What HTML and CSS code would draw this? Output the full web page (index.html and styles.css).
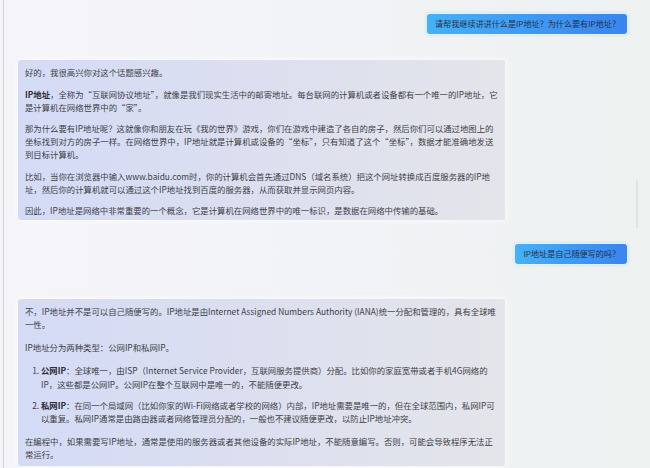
FILE: index.html
```html
<!DOCTYPE html>
<html lang="zh-CN">
<head>
<meta charset="utf-8">
<title>Chat</title>
<link rel="stylesheet" href="styles.css">
</head>
<body>
<div class="page">
  <div class="chat">
    <div class="row user">
      <div class="bubble">请帮我继续讲讲什么是IP地址？为什么要有IP地址？</div>
    </div>
    <div class="row bot">
      <div class="card first">
        <p>好的，我很高兴你对这个话题感兴趣。</p>
        <p><b>IP地址</b>，全称为“互联网协议地址”，就像是我们现实生活中的邮寄地址。每台联网的计算机或者设备都有一个唯一的IP地址，它是计算机在网络世界中的“家”。</p>
        <p>那为什么要有IP地址呢？这就像你和朋友在玩《我的世界》游戏，你们在游戏中建造了各自的房子，然后你们可以通过地图上的坐标找到对方的房子一样。在网络世界中，IP地址就是计算机或设备的“坐标”，只有知道了这个“坐标”，数据才能准确地发送到目标计算机。</p>
        <p>比如，当你在浏览器中输入www.baidu.com时，你的计算机会首先通过DNS（域名系统）把这个网址转换成百度服务器的IP地址，然后你的计算机就可以通过这个IP地址找到百度的服务器，从而获取并显示网页内容。</p>
        <p>因此，IP地址是网络中非常重要的一个概念，它是计算机在网络世界中的唯一标识，是数据在网络中传输的基础。</p>
      </div>
    </div>
    <div class="row user second">
      <div class="bubble">IP地址是自己随便写的吗？</div>
    </div>
    <div class="row bot">
      <div class="card">
        <p>不，IP地址并不是可以自己随便写的。IP地址是由Internet Assigned Numbers Authority (IANA)统一分配和管理的，具有全球唯一性。</p>
        <p>IP地址分为两种类型：公网IP和私网IP。</p>
        <ol>
          <li><b>公网IP</b>：全球唯一，由ISP（Internet Service Provider，互联网服务提供商）分配。比如你的家庭宽带或者手机4G网络的IP，这些都是公网IP。公网IP在整个互联网中是唯一的，不能随便更改。</li>
          <li><b>私网IP</b>：在同一个局域网（比如你家的Wi-Fi网络或者学校的网络）内部，IP地址需要是唯一的，但在全球范围内，私网IP可以重复。私网IP通常是由路由器或者网络管理员分配的，一般也不建议随便更改，以防止IP地址冲突。</li>
        </ol>
        <p>在编程中，如果需要写IP地址，通常是使用的服务器或者其他设备的实际IP地址，不能随意编写。否则，可能会导致程序无法正常运行。</p>
      </div>
    </div>
  </div>
  <div class="scroll-thumb"></div>
</div>
</body>
</html>
```

FILE: styles.css
```css
* { box-sizing: border-box; }
html, body {
  margin: 0;
  padding: 0;
  width: 650px;
  height: 468px;
  overflow: hidden;
}
body {
  font-family: "Noto Sans CJK SC", "Noto Sans", sans-serif;
  background: linear-gradient(90deg, #f5f5f9 0%, #f2f3f6 50%, #edf1f0 100%);
}
.page {
  position: relative;
  height: 468px;
  margin-left: 3px;
  border-left: 1px solid #d3d4da;
  overflow: hidden;
}
.chat {
  display: flex;
  flex-direction: column;
  padding: 13px 22px 0 14px;
}
.row { display: flex; }
.row.user { justify-content: flex-end; }
.row.bot { justify-content: flex-start; }

.bubble {
  height: 22px;
  line-height: 20px;
  padding: 0 7px 0 8px;
  font-size: 8.1px;
  color: #23304f;
  background: linear-gradient(90deg, #45b1f6 0%, #3e9bf2 50%, #3a85ee 100%);
  border: 1px solid rgba(255, 255, 255, 0.85);
  border-radius: 4px;
  box-shadow: 0 0 3px rgba(120, 190, 240, 0.35);
  white-space: nowrap;
}
.row.user + .row.bot { margin-top: 25px; }
.row.bot + .row.user { margin-top: 23px; }
.row.user.second + .row.bot { margin-top: 34px; }

.card {
  width: 487px;
  padding: 6px 7px 4px 7px;
  font-size: 8.4px;
  line-height: 13.4px;
  color: #3d3f46;
  background: linear-gradient(90deg, #d4dbf6 0%, #dcdfef 50%, #e4e5ea 100%);
  border-radius: 3px;
  box-shadow: 0 0 6px rgba(255, 255, 255, 0.9);
}
.card p { margin: 0 0 9.5px; }
.card.first { padding-bottom: 3px; line-height: 13px; }
.card.first p { margin-bottom: 8.5px; }
.card p:last-child { margin-bottom: 0; }
.card b { font-weight: 700; color: #2c2e35; }
.card ol {
  margin: 0 0 9px;
  padding-left: 16px;
}
.card li { margin-bottom: 8px; }
.card li:last-child { margin-bottom: 9px; }

.scroll-thumb {
  position: absolute;
  left: 632px;
  top: 180px;
  width: 2px;
  height: 48px;
  background: #dfe3e3;
  border-radius: 1px;
}
```
